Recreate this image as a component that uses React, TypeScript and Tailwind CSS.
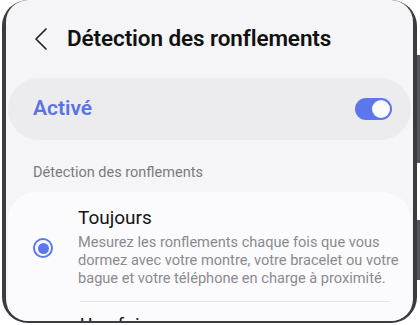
export default function App() {
  return (
    <div className="relative w-[420px] h-[325px] overflow-hidden bg-white font-['Roboto','Inter',sans-serif]">
      <div className="ml-[2px] w-[415px] h-[323px] rounded-[26px] bg-[#3b3b42] px-[4px] pb-[2px]">
        <div className="h-full w-full overflow-hidden rounded-[22px] bg-[#f5f5f7]">
          <div className="flex h-[78px] items-center pl-[28px]">
            <svg width="14" height="24" viewBox="0 0 14 24" fill="none" className="text-[#222]">
              <polyline points="12,2 2,12 12,22" stroke="currentColor" strokeWidth="1.7" strokeLinecap="round" strokeLinejoin="round" />
            </svg>
            <h1 className="ml-[19px] text-[22.5px] font-semibold tracking-[-0.1px] text-[#111]">
              Détection des ronflements
            </h1>
          </div>

          <div className="mx-[2px] flex h-[62px] items-center justify-between rounded-full bg-[#ececef] pl-[25px] pr-[19px]">
            <span className="text-[21px] font-semibold text-[#5b72e6]">Activé</span>
            <div className="flex h-[22px] w-[37px] items-center justify-end rounded-full bg-[#5c77ec] pr-[2px]">
              <div className="h-[18px] w-[18px] rounded-full bg-[#fbfbfe]" />
            </div>
          </div>

          <div className="pl-[27px] pt-[22px] pb-[8px] text-[14.5px] text-[#7a7a7e]">
            Détection des ronflements
          </div>

          <div className="mx-[2px] rounded-t-[28px] bg-[#fbfbfd] pt-[14px]">
            <div className="flex items-center">
              <div className="flex w-[70px] justify-center pt-[4px]">
                <div className="flex h-[20px] w-[20px] items-center justify-center rounded-full border-[2px] border-[#5c77ec]">
                  <div className="h-[11px] w-[11px] rounded-full bg-[#5c77ec]" />
                </div>
              </div>
              <div className="flex-1">
                <div className="text-[19px] leading-[24px] text-[#151515]">Toujours</div>
                <p className="mt-[3px] whitespace-nowrap text-[14.6px] leading-[18px] text-[#8a8a8e]">
                  Mesurez les ronflements chaque fois que vous
                  <br />
                  dormez avec votre montre, votre bracelet ou votre
                  <br />
                  bague et votre téléphone en charge à proximité.
                </p>
              </div>
            </div>
            <div className="ml-[72px] mr-[22px] mt-[14px] border-t border-[#e2e2e6]" />
            <div className="pl-[72px] pt-[11px] text-[19px] leading-[24px] text-[#151515]">Une fois</div>
          </div>
        </div>
      </div>
      <div className="absolute right-0 top-[55px] h-[108px] w-[3px] bg-[#55555c]" />
      <div className="absolute right-0 top-[220px] h-[60px] w-[3px] bg-[#55555c]" />
    </div>
  );
}
